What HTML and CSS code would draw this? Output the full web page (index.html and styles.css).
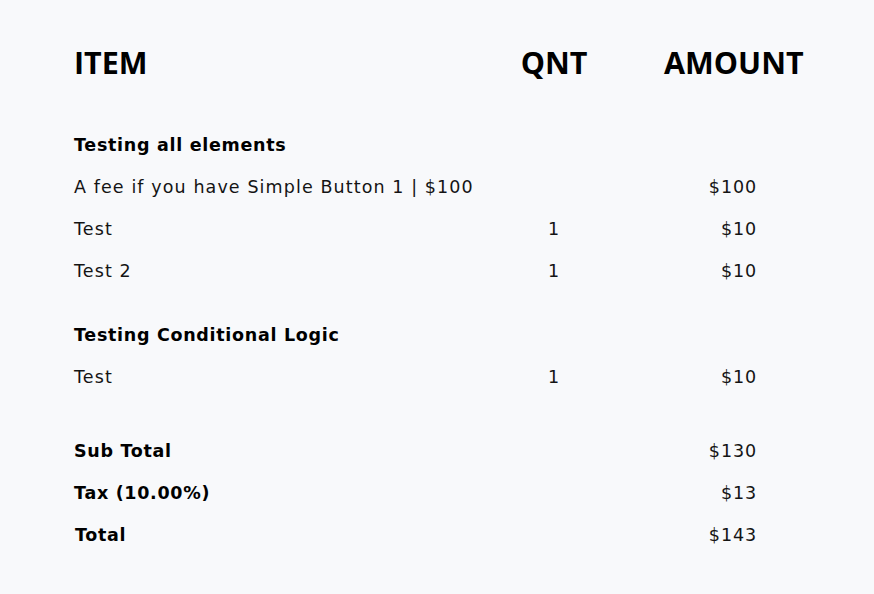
FILE: index.html
```html
<!DOCTYPE html>
<html lang="en">
<head>
<meta charset="utf-8">
<title>Invoice summary</title>
<link rel="stylesheet" href="styles.css">
</head>
<body>
<div class="invoice">
  <div class="row head">
    <div class="c-item">ITEM</div>
    <div class="c-qty">QNT</div>
    <div class="c-amt">AMOUNT</div>
  </div>

  <div class="group">
    <div class="row title"><div class="c-item">Testing all elements</div></div>
    <div class="row"><div class="c-item">A fee if you have Simple Button 1 | $100</div><div class="c-qty"></div><div class="c-amt">$100</div></div>
    <div class="row"><div class="c-item">Test</div><div class="c-qty">1</div><div class="c-amt">$10</div></div>
    <div class="row"><div class="c-item">Test 2</div><div class="c-qty">1</div><div class="c-amt">$10</div></div>
  </div>

  <div class="group">
    <div class="row title"><div class="c-item">Testing Conditional Logic</div></div>
    <div class="row"><div class="c-item">Test</div><div class="c-qty">1</div><div class="c-amt">$10</div></div>
  </div>

  <div class="totals">
    <div class="row total"><div class="c-item">Sub Total</div><div class="c-qty"></div><div class="c-amt">$130</div></div>
    <div class="row total"><div class="c-item">Tax (10.00%)</div><div class="c-qty"></div><div class="c-amt">$13</div></div>
    <div class="row total grand"><div class="c-item">Total</div><div class="c-qty"></div><div class="c-amt">$143</div></div>
  </div>
</div>
</body>
</html>
```

FILE: styles.css
```css
html, body {
  margin: 0;
  padding: 0;
  background: #f8f9fb;
}

body {
  font-family: "DejaVu Sans", "Open Sans", sans-serif;
  color: #141414;
}

.invoice {
  padding: 40px 0 0 74px;
}

.row {
  display: grid;
  grid-template-columns: 415px 130px 182px;
  font-size: 17.5px;
  line-height: 42px;
  height: 42px;
  letter-spacing: 1.1px;
}

.c-qty {
  text-align: center;
}

.c-amt {
  text-align: right;
  padding-right: 44px;
  letter-spacing: 0.9px;
}

.head {
  font-family: "Open Sans", "DejaVu Sans", sans-serif;
  font-size: 30.5px;
  font-weight: 700;
  line-height: 44px;
  height: 44px;
  letter-spacing: 0;
  color: #000;
  margin-bottom: 40px;
}

.head .c-amt {
  text-align: left;
  letter-spacing: 0;
  padding: 0 0 0 45px;
}

.title .c-item,
.total .c-item {
  font-weight: 600;
  color: #000;
  letter-spacing: 0.7px;
}

.group + .group {
  margin-top: 22px;
}

.totals {
  margin-top: 32px;
}

.grand .c-item {
  padding-left: 1px;
}
```
